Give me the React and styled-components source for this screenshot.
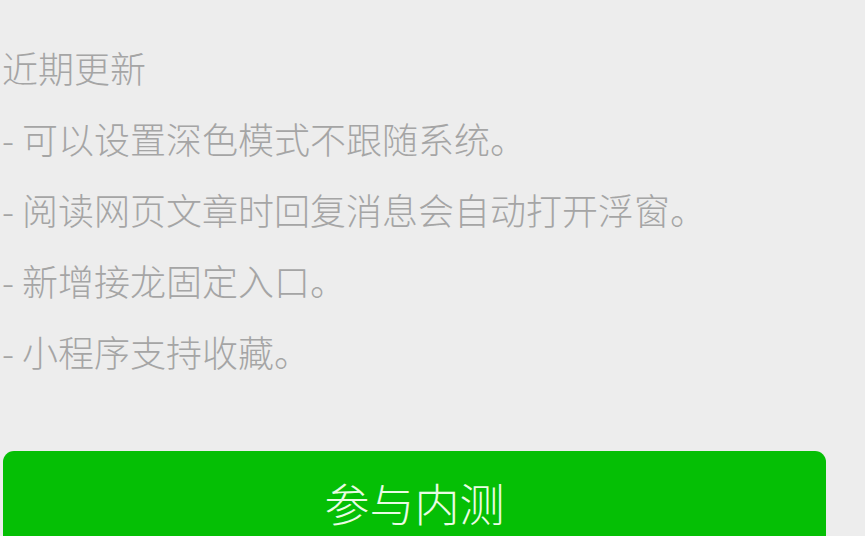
import React from 'react';
import styled, { createGlobalStyle } from 'styled-components';

const GlobalStyle = createGlobalStyle`
  html, body {
    margin: 0;
    padding: 0;
    background: #ededed;
    overflow: hidden;
  }
  body {
    font-family: "Noto Sans CJK SC", "Noto Sans", sans-serif;
  }
`;

const updates = [
  '可以设置深色模式不跟随系统。',
  '阅读网页文章时回复消息会自动打开浮窗。',
  '新增接龙固定入口。',
  '小程序支持收藏。',
];

export default function App() {
  return (
    <Page>
      <GlobalStyle />
      <Notes>
        <Title>近期更新</Title>
        {updates.map((item) => (
          <Item key={item}>- {item}</Item>
        ))}
      </Notes>
      <JoinButton>参与内测</JoinButton>
    </Page>
  );
}

const Page = styled.div`
  width: 865px;
  height: 536px;
  padding: 32px 0 0 2px;
  box-sizing: border-box;
  display: flex;
  flex-direction: column;
`;

const Notes = styled.div`
  display: flex;
  flex-direction: column;
  color: #a5a5a5;
  font-size: 36px;
  font-weight: 300;
  line-height: 71px;
`;

const Title = styled.div`
  letter-spacing: 0;
`;

const Item = styled.div`
  white-space: nowrap;
`;

const JoinButton = styled.button`
  margin-top: 64px;
  margin-left: 1px;
  width: 823px;
  height: 108px;
  flex-shrink: 0;
  border: none;
  border-radius: 11px;
  background: #05bf05;
  color: #eafce4;
  font-family: "Noto Sans CJK SC", "Noto Sans", sans-serif;
  font-size: 45px;
  font-weight: 300;
  padding: 0 0 6px;
  cursor: pointer;
`;
